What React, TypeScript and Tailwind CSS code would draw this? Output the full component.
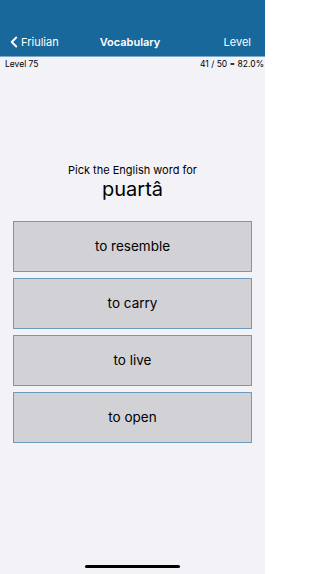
import { ChevronLeft } from 'lucide-react';

const answers = ['to resemble', 'to carry', 'to live', 'to open'];

export default function App() {
    return (
        <div
            className="flex h-[574px] w-[265px] flex-col bg-[#f2f2f7] text-black"
            style={{ fontFamily: 'Inter, "Noto Sans", sans-serif' }}
        >
            <div className="grid h-[56px] grid-cols-[1fr_auto_1fr] items-end bg-[#19689c] pb-[5px] pl-[5px] pr-[14px] text-white">
                <div className="flex items-center text-[11px]">
                    <ChevronLeft className="h-[18px] w-[18px]" strokeWidth={2.6} />
                    <span className="-ml-[2px]">Friulian</span>
                </div>
                <span className="pb-[1px] pl-[4px] text-[11px] font-semibold">Vocabulary</span>
                <span className="pb-[1px] text-right text-[11px]">Level</span>
            </div>
            <div className="h-px bg-[#7fa8c8]" />
            <div className="flex h-[14px] items-center justify-between pl-[5px] pr-[1px] text-[8.5px]">
                <span>Level 75</span>
                <span>41 / 50 = 82.0%</span>
            </div>
            <div className="mt-[92px] flex flex-col items-center">
                <p className="text-[11px] leading-[14px]">Pick the English word for</p>
                <p className="text-[20px] leading-[25px]">puartâ</p>
            </div>
            <div className="mt-[19px] flex flex-col gap-[6px] px-[13px]">
                {answers.map((a) => (
                    <div
                        key={a}
                        className="flex h-[51px] items-center justify-center border border-[#6d9bbf] bg-[#d1d1d6] text-[13.5px]"
                    >
                        {a}
                    </div>
                ))}
            </div>
            <div className="mt-auto mb-[6px] flex justify-center">
                <div className="h-[3px] w-[95px] rounded-full bg-black" />
            </div>
        </div>
    );
}
